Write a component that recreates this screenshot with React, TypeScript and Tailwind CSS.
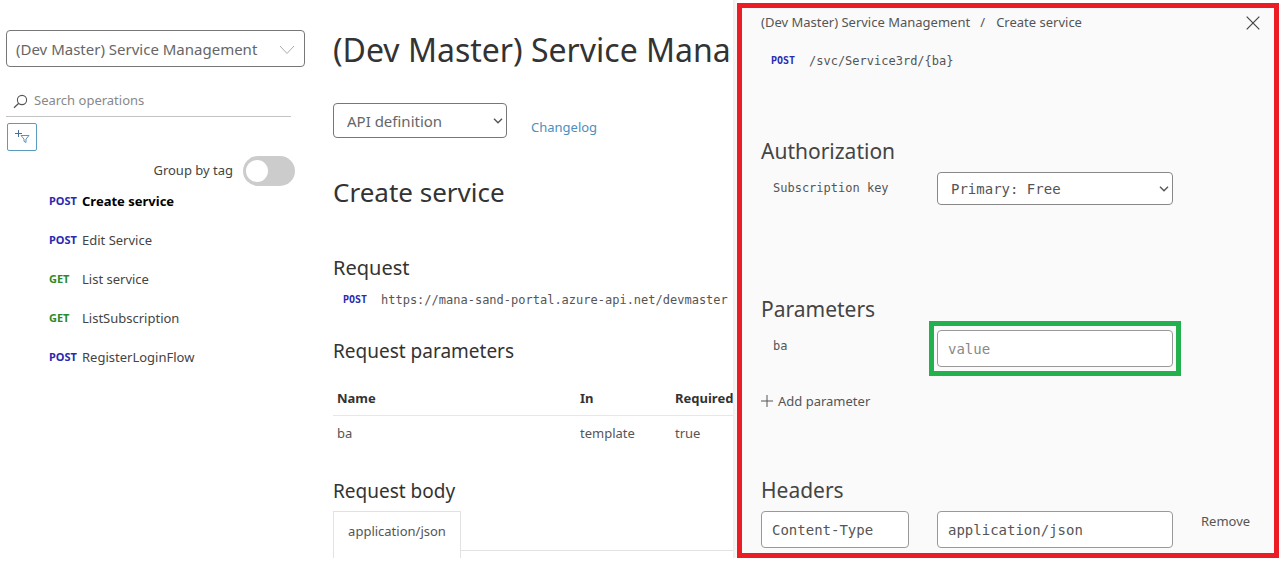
import React from 'react';

interface Operation {
    method: 'POST' | 'GET';
    name: string;
    active?: boolean;
}

const operations: Operation[] = [
    { method: 'POST', name: 'Create service', active: true },
    { method: 'POST', name: 'Edit Service' },
    { method: 'GET', name: 'List service' },
    { method: 'GET', name: 'ListSubscription' },
    { method: 'POST', name: 'RegisterLoginFlow' },
];

const Caret = ({ className }: { className: string }) => (
    <svg viewBox="0 0 10 6" fill="none" stroke="currentColor" className={`absolute pointer-events-none ${className}`}>
        <path d="M1 0.8 5 4.8 9 0.8" strokeWidth="1.4" />
    </svg>
);

const Sidebar = () => (
    <nav aria-label="Operations" className="w-[333px] shrink-0 pl-[6px] pt-[30px]">
        <div className="relative w-[299px]">
            <select
                aria-label="API"
                className="appearance-none w-full h-[37px] pt-[2px] pl-[9px] pr-8 rounded border border-[#777] bg-white text-[15px] text-[#666]"
            >
                <option>(Dev Master) Service Management</option>
            </select>
            <svg viewBox="0 0 16 10" fill="none" stroke="#aaa" className="absolute right-[10px] top-[15px] w-4 h-[10px] pointer-events-none">
                <path d="M1 1 8 8.5 15 1" />
            </svg>
        </div>

        <div className="mt-[18px] w-[285px] h-8 flex items-center gap-[6px] pl-[7px] pt-px border-b border-[#c4c4c4]">
            <svg viewBox="0 0 15 15" fill="none" stroke="#555" className="w-[15px] h-[15px]">
                <circle cx="9" cy="6" r="4.6" strokeWidth="1.1" />
                <path d="M5.8 9.3 1 13.8" strokeWidth="1.3" />
            </svg>
            <input
                type="text"
                aria-label="Search operations"
                placeholder="Search operations"
                className="flex-1 min-w-0 text-[13px] outline-none placeholder:text-[#888]"
            />
        </div>

        <button
            aria-label="Add filter"
            className="mt-[6px] ml-px w-[30px] h-7 flex items-center justify-center rounded-xs border border-[#5b9bbd]"
        >
            <svg viewBox="0 0 16 16" fill="none" stroke="#5f93bd" className="w-4 h-4">
                <path d="M4.5 1v7M1 4.5h7" stroke="#4a6f96" />
                <path d="M7 6.5h8l-3 3.6v3.4l-2-1.2v-2.2z" />
            </svg>
        </button>

        <label className="mt-[5px] w-[289px] flex items-center justify-end gap-[10px] text-[13px] text-[#444]">
            Group by tag
            <input type="checkbox" className="peer sr-only" />
            <span className="w-[52px] h-[30px] flex items-center rounded-full bg-[#ccc] px-[3px] peer-checked:justify-end">
                <span className="w-[22px] h-[22px] rounded-full bg-white" />
            </span>
        </label>

        <ul className="-mt-1">
            {operations.map((op) => (
                <li key={op.name}>
                    <a href="#" className="h-[39px] pl-[43px] flex items-center text-[13px]">
                        <span className={`w-[33px] shrink-0 text-[11px] font-bold ${op.method === 'POST' ? 'text-[#2a2ab0]' : 'text-[#2a8a2a]'}`}>
                            {op.method}
                        </span>
                        <span className={op.active ? 'font-bold text-black' : 'text-[#444]'}>{op.name}</span>
                    </a>
                </li>
            ))}
        </ul>
    </nav>
);

const Definition = () => (
    <main className="flex-1 min-w-0 overflow-hidden whitespace-nowrap text-[#333]">
        <h1 className="mt-[26px] text-[32px] leading-[48px]">(Dev Master) Service Mana</h1>

        <div className="mt-[29px] flex items-center">
            <div className="relative w-[174px]">
                <select
                    aria-label="Export"
                    className="appearance-none w-full h-[35px] pt-[2px] pl-[13px] rounded border border-[#777] bg-white text-[15px] text-[#666]"
                >
                    <option>API definition</option>
                </select>
                <Caret className="right-1 top-[15px] w-[10px] h-[6px] text-[#555]" />
            </div>
            <a href="#" className="ml-6 mt-3 text-[13px] leading-5 text-[#4a8fc0]">Changelog</a>
        </div>

        <h2 className="mt-[34px] text-[26px] leading-10">Create service</h2>

        <h3 className="mt-[41px] text-[20px] leading-[30px]">Request</h3>
        <div className="mt-[7px] pl-[10px] flex items-center font-['DejaVu_Sans_Mono',monospace] text-[12px] leading-5">
            <span className="w-[38px] shrink-0 text-[10px] font-bold text-[#2a2ab0]">POST</span>
            <span className="text-[#555]">https://mana-sand-portal.azure-api.net/devmaster</span>
        </div>

        <h3 className="mt-[26px] text-[19px] leading-[30px]">Request parameters</h3>
        <table className="mt-4 w-full table-fixed text-left text-[13px]">
            <thead>
                <tr className="h-[33px] border-b border-[#e4e8ea]">
                    <th className="w-[243px] pl-1 font-bold">Name</th>
                    <th className="w-[95px] pl-1 font-bold">In</th>
                    <th className="pl-1 font-bold">Required</th>
                </tr>
            </thead>
            <tbody>
                <tr className="h-9 text-[#555]">
                    <td className="pl-1">ba</td>
                    <td className="pl-1">template</td>
                    <td className="pl-1">true</td>
                </tr>
            </tbody>
        </table>

        <h3 className="mt-[25px] text-[19px] leading-[30px]">Request body</h3>
        <div role="tablist" className="mt-[5px] flex items-start text-[13px]">
            <button role="tab" aria-selected="true" className="w-32 h-[47px] pb-[6px] border border-b-0 border-[#e2e2e2] text-[#555]">
                application/json
            </button>
            <span className="flex-1 h-10 border-b border-[#e2e2e2]" />
        </div>
    </main>
);

const fieldClass = 'block w-full h-[37px] pt-[2px] rounded border border-[#999] bg-white px-[10px] text-[14px] text-[#555] placeholder:text-[#888]';
const headingClass = "font-['Noto_Sans',sans-serif] text-[21px] leading-[30px] text-[#444]";

const Console = () => (
    <aside className="w-[549px] shrink-0 pl-1 pt-[3px] pr-[3px] bg-linear-to-r from-[#eee] from-0% to-white to-1%">
        <div className="border-5 border-[#ec1c24] bg-[#fafafa] pl-[19px] pr-[14px] pb-[5px] font-['DejaVu_Sans_Mono',monospace] text-[12px] text-[#555]">
            <header className="pt-[5px] flex items-center justify-between font-['Noto_Sans',sans-serif] text-[13px]">
                <div className="flex">
                    <a href="#">(Dev Master) Service Management</a>
                    <span className="w-[26px] pl-[10px]">/</span>
                    <span>Create service</span>
                </div>
                <button aria-label="Close">
                    <svg viewBox="0 0 14 14" stroke="#444" className="w-[14px] h-[14px]">
                        <path d="M0.7 0.7 13.3 13.3M13.3 0.7 0.7 13.3" strokeWidth="1.2" />
                    </svg>
                </button>
            </header>

            <div className="mt-[18px] pl-[10px] flex items-center leading-5">
                <span className="w-[38px] shrink-0 text-[10px] font-bold text-[#2a2ab0]">POST</span>
                <span>{'/svc/Service3rd/{ba}'}</span>
            </div>

            <h2 className={`mt-[65px] ${headingClass}`}>Authorization</h2>
            <div className="mt-[6px] flex items-start">
                <label htmlFor="key" className="w-44 pl-3 pt-[6px] leading-5">Subscription key</label>
                <div className="relative w-[236px]">
                    <select id="key" className="appearance-none w-full h-[33px] pt-[3px] pl-[13px] rounded border border-[#888] bg-white text-[14px]">
                        <option>Primary: Free</option>
                    </select>
                    <Caret className="right-1 top-[14px] w-[10px] h-[6px]" />
                </div>
            </div>

            <h2 className={`mt-[89px] ${headingClass}`}>Parameters</h2>
            <div className="-mt-[3px] flex items-start">
                <label htmlFor="ba" className="w-[168px] pl-3 pt-[15px] leading-5">ba</label>
                <div className="w-[252px] border-5 border-[#22b14c] px-[3px] py-1">
                    <input id="ba" placeholder="value" className={fieldClass} />
                </div>
            </div>

            <button className="mt-[15px] flex items-center gap-[5px] font-['Noto_Sans',sans-serif] text-[13px] leading-5">
                <svg viewBox="0 0 12 12" stroke="#555" className="w-3 h-3">
                    <path d="M6 0v12M0 6h12" />
                </svg>
                Add parameter
            </button>

            <h2 className={`mt-[64px] ${headingClass}`}>Headers</h2>
            <div className="mt-[6px] flex items-start">
                <div className="w-[148px] mr-7">
                    <input aria-label="Header name" defaultValue="Content-Type" className={fieldClass} />
                </div>
                <div className="w-[236px]">
                    <input aria-label="Header value" defaultValue="application/json" className={fieldClass} />
                </div>
                <button className="ml-7 font-['Noto_Sans',sans-serif] text-[13px] leading-5">Remove</button>
            </div>
        </div>
    </aside>
);

const App: React.FC = () => (
    <div className="flex items-start overflow-hidden bg-white font-['Noto_Sans',sans-serif]">
        <Sidebar />
        <Definition />
        <Console />
    </div>
);

export default App;
